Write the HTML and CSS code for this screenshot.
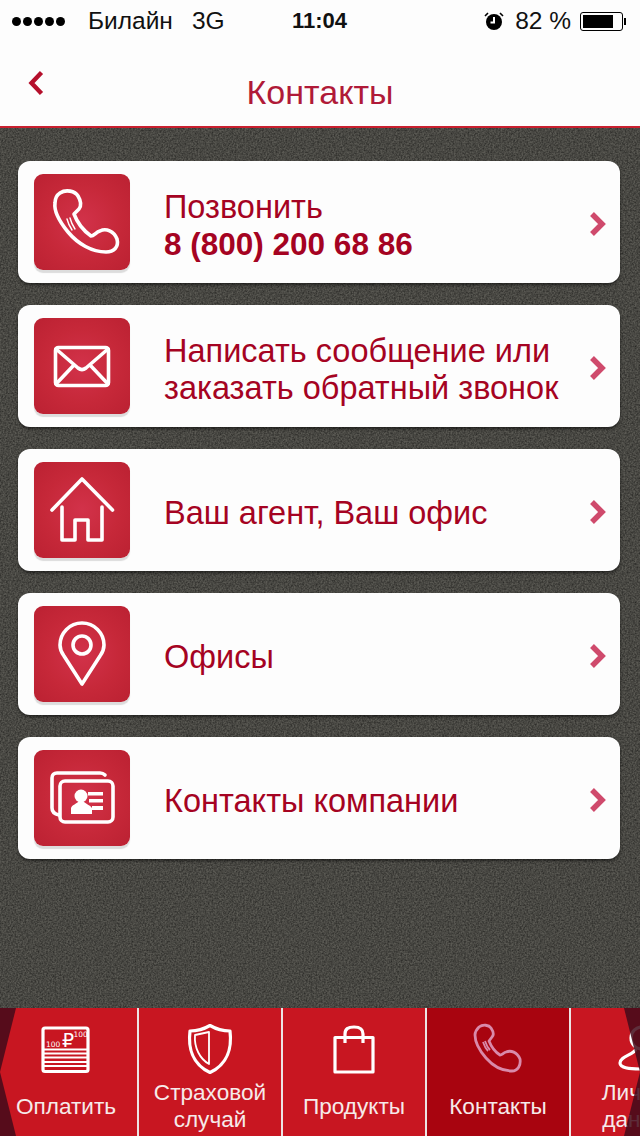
FILE: index.html
```html
<!DOCTYPE html>
<html lang="ru">
    <head>
        <meta charset="UTF-8" />
        <meta name="viewport" content="width=device-width, initial-scale=1.0" />
        <title>Контакты</title>
        <link rel="stylesheet" href="styles.css">
    </head>
    <body>
        <header class="top">
            <div class="status">
                <div class="status-left">
                    <span class="dots"><i></i><i></i><i></i><i></i><i></i></span>
                    <span>Билайн</span>
                    <span class="net">3G</span>
                </div>
                <div class="clock">11:04</div>
                <div class="status-right">
                    <svg class="alarm" viewBox="0 0 20 20" width="20" height="20">
                        <circle cx="10" cy="11" r="8" fill="#000"/>
                        <path d="M10 6v5.5h-3.5" fill="none" stroke="#fff" stroke-width="2"/>
                        <path d="M1 5l3-3M19 5l-3-3" stroke="#000" stroke-width="1.6"/>
                    </svg>
                    <span class="pct">82 %</span>
                    <span class="battery"><b></b></span>
                </div>
            </div>
            <nav class="nav">
                <svg class="back" viewBox="0 0 16 26" width="16" height="26">
                    <path d="M13.5 2.5L3.5 13l10 10.5" fill="none" stroke="#b5102c" stroke-width="4.4"/>
                </svg>
                <h1>Контакты</h1>
            </nav>
        </header>

        <main class="list">
            <a class="card">
                <span class="tile">
                    <svg viewBox="0 0 96 96" width="96" height="96" class="ico">
                        <path d="M26 19C32 15 41 17 44 22C47 27 48 31 45 35L40 40C43 48 50 57 57 62C60 62 62 58 66 57C72 54 80 57 83 65C85 73 80 78 72 78C58 78 44 70 34 58C25 47 20 36 21 29C21 25 23 21 26 19Z"/>
                        <path class="thin" d="M33 45C34 49 36 53 38 56M36 44C37 48 39 52 41 55"/>
                    </svg>
                </span>
                <span class="text">Позвонить<br><b>8 (800) 200 68 86</b></span>
                <svg class="more" viewBox="0 0 18 26" width="18" height="26"><path d="M3 3l10 10L3 23"/></svg>
            </a>
            <a class="card">
                <span class="tile">
                    <svg viewBox="0 0 96 96" width="96" height="96" class="ico">
                        <rect x="21.500" y="29.500" width="53" height="38" rx="3"/>
                        <path d="M22 31L44 50C46.500 52 49.500 52 52 50L74 31M22 66L40 47M74 66L56 47"/>
                    </svg>
                </span>
                <span class="text">Написать сообщение или<br>заказать обратный звонок</span>
                <svg class="more" viewBox="0 0 18 26" width="18" height="26"><path d="M3 3l10 10L3 23"/></svg>
            </a>
            <a class="card">
                <span class="tile">
                    <svg viewBox="0 0 96 96" width="96" height="96" class="ico">
                        <path d="M18 48L48 17L78.500 48"/>
                        <path d="M28 45V78H41V58H54V78H68V45"/>
                    </svg>
                </span>
                <span class="text">Ваш агент, Ваш офис</span>
                <svg class="more" viewBox="0 0 18 26" width="18" height="26"><path d="M3 3l10 10L3 23"/></svg>
            </a>
            <a class="card">
                <span class="tile">
                    <svg viewBox="0 0 96 96" width="96" height="96" class="ico">
                        <path d="M48 78L30 50C27 46 26 43 26 39A22 22 0 0 1 70 39C70 43 69 46 66 50Z"/>
                        <circle cx="48" cy="39" r="9"/>
                    </svg>
                </span>
                <span class="text">Офисы</span>
                <svg class="more" viewBox="0 0 18 26" width="18" height="26"><path d="M3 3l10 10L3 23"/></svg>
            </a>
            <a class="card">
                <span class="tile">
                    <svg viewBox="0 0 96 96" width="96" height="96" class="ico">
                        <path d="M71 25C70 24 68 23 66 23H23C20 23 18 25 18 28V58C18 62 20 64 25 65"/>
                        <rect x="26" y="31" width="53" height="41" rx="5"/>
                        <circle class="solid" cx="47" cy="46" r="6.500"/>
                        <path class="solid" d="M37 64V58C38 55 42 54 44 52H50C52 54 56 55 58 58V64Z"/>
                        <path class="solid" d="M54 42H69V45.500H54ZM55 49H69V52.500H55ZM58 56H69V60H58Z"/>
                    </svg>
                </span>
                <span class="text">Контакты компании</span>
                <svg class="more" viewBox="0 0 18 26" width="18" height="26"><path d="M3 3l10 10L3 23"/></svg>
            </a>
        </main>

        <footer class="tabs">
            <div class="tab">
                <svg viewBox="0 0 64 56" width="64" height="56" class="tab-ico">
                    <rect x="9" y="6" width="45" height="43.500" rx="2"/>
                    <path class="thin" d="M9 27.500H54M9 31.500H54M9 35.500H54M9 40H54M9 44H54"/>
                    <text x="28" y="25" class="rub">₽</text>
                    <text x="39.500" y="15" class="hundred">100</text>
                    <text x="12" y="25" class="hundred">100</text>
                </svg>
                <span class="label">Оплатить</span>
            </div>
            <div class="tab">
                <svg viewBox="0 0 64 56" width="64" height="56" class="tab-ico">
                    <path d="M32 3.500C38 7 45 9 52 9C54 25 50 42 32 50.500C14 42 10 25 12 9C19 9 26 7 32 3.500Z"/>
                    <path class="thin" d="M17 13L31 10V42C22 37 16 26 17 13Z"/>
                </svg>
                <span class="label">Страховой<br>случай</span>
            </div>
            <div class="tab">
                <svg viewBox="0 0 64 56" width="64" height="56" class="tab-ico">
                    <path d="M13 15.500H51V50H13Z"/>
                    <path d="M23 21V12C23 7 26 5 32 5C38 5 41 7 41 12V21"/>
                </svg>
                <span class="label">Продукты</span>
            </div>
            <div class="tab active">
                <svg viewBox="0 0 64 56" width="64" height="56" class="tab-ico">
                    <path d="M13 5C17 2 23 3 25 6C27 9 28 13 26 15L23 19C25 24 29 30 34 33C36 33 37 31 40 30C45 28 51 30 54 37C55 43 52 49 46 49C36 49 27 44 20 36C13 28 9 19 9 13C9 10 11 7 13 5Z"/>
                    <path class="thin" d="M17 20C18 23 20 27 22 29M19 19C20 22 22 26 24 28"/>
                </svg>
                <span class="label">Контакты</span>
            </div>
            <div class="tab">
                <svg viewBox="0 0 64 56" width="64" height="56" class="tab-ico">
                    <circle cx="32" cy="16" r="11"/>
                    <path d="M26 27C24 33 10 34 10 41C10 46 20 47 32 47C44 47 54 46 54 41C54 34 40 33 38 27"/>
                </svg>
                <span class="label">Личные<br>данные</span>
            </div>
            <span class="edge edge-left"></span>
            <span class="edge edge-right"></span>
        </footer>
    </body>
</html>
```

FILE: styles.css
```css
* {
    box-sizing: border-box;
}
html, body {
    margin: 0;
    height: 100%;
}
body {
    width: 640px;
    height: 1136px;
    overflow: hidden;
    display: flex;
    flex-direction: column;
    font-family: "Liberation Sans", Arial, sans-serif;
    background-color: #5a5953;
    background-image: url("data:image/svg+xml,%3Csvg xmlns='http://www.w3.org/2000/svg' width='256' height='256'%3E%3Cfilter id='n'%3E%3CfeTurbulence type='fractalNoise' baseFrequency='.6' numOctaves='3' stitchTiles='stitch'/%3E%3CfeColorMatrix values='0 0 0 0 0 0 0 0 0 0 0 0 0 0 0 0 0 0 .8 -.2'/%3E%3C/filter%3E%3Crect width='256' height='256' filter='url(%23n)'/%3E%3C/svg%3E");
}

/* top */
.top {
    background: #fdfdfd;
    border-bottom: 2px solid #c9202f;
}
.status {
    display: grid;
    grid-template-columns: 1fr auto 1fr;
    align-items: center;
    height: 40px;
    padding: 2px 14px 0 12px;
    font-size: 24.500px;
    color: #111;
}
.status-left {
    display: flex;
    align-items: center;
}
.dots {
    display: flex;
    gap: 2px;
    margin-right: 23px;
}
.dots i {
    width: 9px;
    height: 9px;
    border-radius: 50%;
    background: #000;
}
.net {
    margin-left: 19px;
}
.clock {
    font-weight: 700;
    font-size: 22px;
    padding-left: 1px;
}
.status-right {
    display: flex;
    align-items: center;
    justify-content: flex-end;
}
.pct {
    margin: 0 9px 0 11px;
}
.battery {
    position: relative;
    width: 43px;
    height: 19px;
    margin-right: 3px;
    padding: 2px;
    border: 1px solid #000;
    border-radius: 3px;
}
.battery::after {
    content: "";
    position: absolute;
    right: -4px;
    top: 5px;
    width: 2px;
    height: 7px;
    background: #000;
}
.battery b {
    display: block;
    width: 82%;
    height: 100%;
    background: #000;
}
.nav {
    display: grid;
    grid-template-columns: 1fr auto 1fr;
    height: 86px;
    padding-left: 28px;
}
.back {
    margin-top: 30px;
}
.nav h1 {
    margin: 33px 0 0 -28px;
    font-size: 34px;
    line-height: 38px;
    font-weight: 400;
    color: #b01a38;
}

/* list */
.list {
    flex: 1;
    display: flex;
    flex-direction: column;
    gap: 22px;
    padding: 33px 20px 0 18px;
}
.card {
    display: flex;
    align-items: center;
    height: 122px;
    padding: 0 13px 0 16px;
    border-radius: 12px;
    background: #fdfdfd;
    box-shadow: 0 2px 3px rgba(0, 0, 0, .5);
}
.tile {
    flex: none;
    width: 96px;
    height: 96px;
    border-radius: 9px;
    background: radial-gradient(circle at 50% 50%, #d2324a 0%, #c62839 55%, #bb2132 100%);
    box-shadow: 0 3px 1px #dcdcdc;
}
.ico {
    display: block;
    fill: none;
    stroke: #fff;
    stroke-width: 3.600;
    stroke-linejoin: round;
    stroke-linecap: round;
}
.ico .thin {
    stroke-width: 1.400;
}
.ico .solid {
    fill: #fff;
    stroke: none;
}
.text {
    flex: 1;
    margin-left: 34px;
    padding-top: 7px;
    font-size: 32.500px;
    line-height: 37px;
    color: #a50322;
    white-space: nowrap;
}
.text b {
    font-size: 31.500px;
}
.more {
    flex: none;
    margin-top: 3px;
    fill: none;
    stroke: #cf4a6c;
    stroke-width: 5.500;
}

/* tabs */
.tabs {
    position: relative;
    flex: none;
    display: flex;
    width: 640px;
    height: 128px;
    overflow: hidden;
    background: #c81621;
}
.tab {
    flex: none;
    width: 144px;
    display: flex;
    flex-direction: column;
    align-items: center;
    padding-top: 14px;
    border-right: 2px solid #ece4e4;
    color: #f6eaea;
}
.tab:first-child {
    margin-left: -5px;
}
.tab.active {
    background-color: #a8040f;
}
.tab.active .tab-ico {
    stroke: #d98aaa;
    stroke-width: 2.800;
}
.tab-ico {
    display: block;
    fill: none;
    stroke: #fff;
    stroke-width: 3.200;
    stroke-linejoin: round;
    overflow: visible;
}
.tab-ico .thin {
    stroke-width: 1.800;
}
.tab-ico text {
    fill: #fff;
    stroke: none;
    font-family: "DejaVu Sans", "Liberation Sans", sans-serif;
}
.rub {
    font-size: 19px;
}
.hundred {
    font-size: 7.500px;
}
.label {
    display: flex;
    align-items: center;
    height: 54px;
    margin-top: 1px;
    font-size: 22.600px;
    line-height: 27px;
    text-align: center;
    white-space: nowrap;
}
.edge {
    position: absolute;
    top: 0;
    width: 16px;
    height: 128px;
    background: rgba(66, 10, 26, .85);
}
.edge-left {
    left: 0;
    clip-path: polygon(0 0, 100% 0, 0 50%, 100% 100%, 0 100%);
}
.edge-right {
    right: 0;
    clip-path: polygon(0 0, 100% 0, 100% 100%, 0 100%, 100% 50%);
}
```
